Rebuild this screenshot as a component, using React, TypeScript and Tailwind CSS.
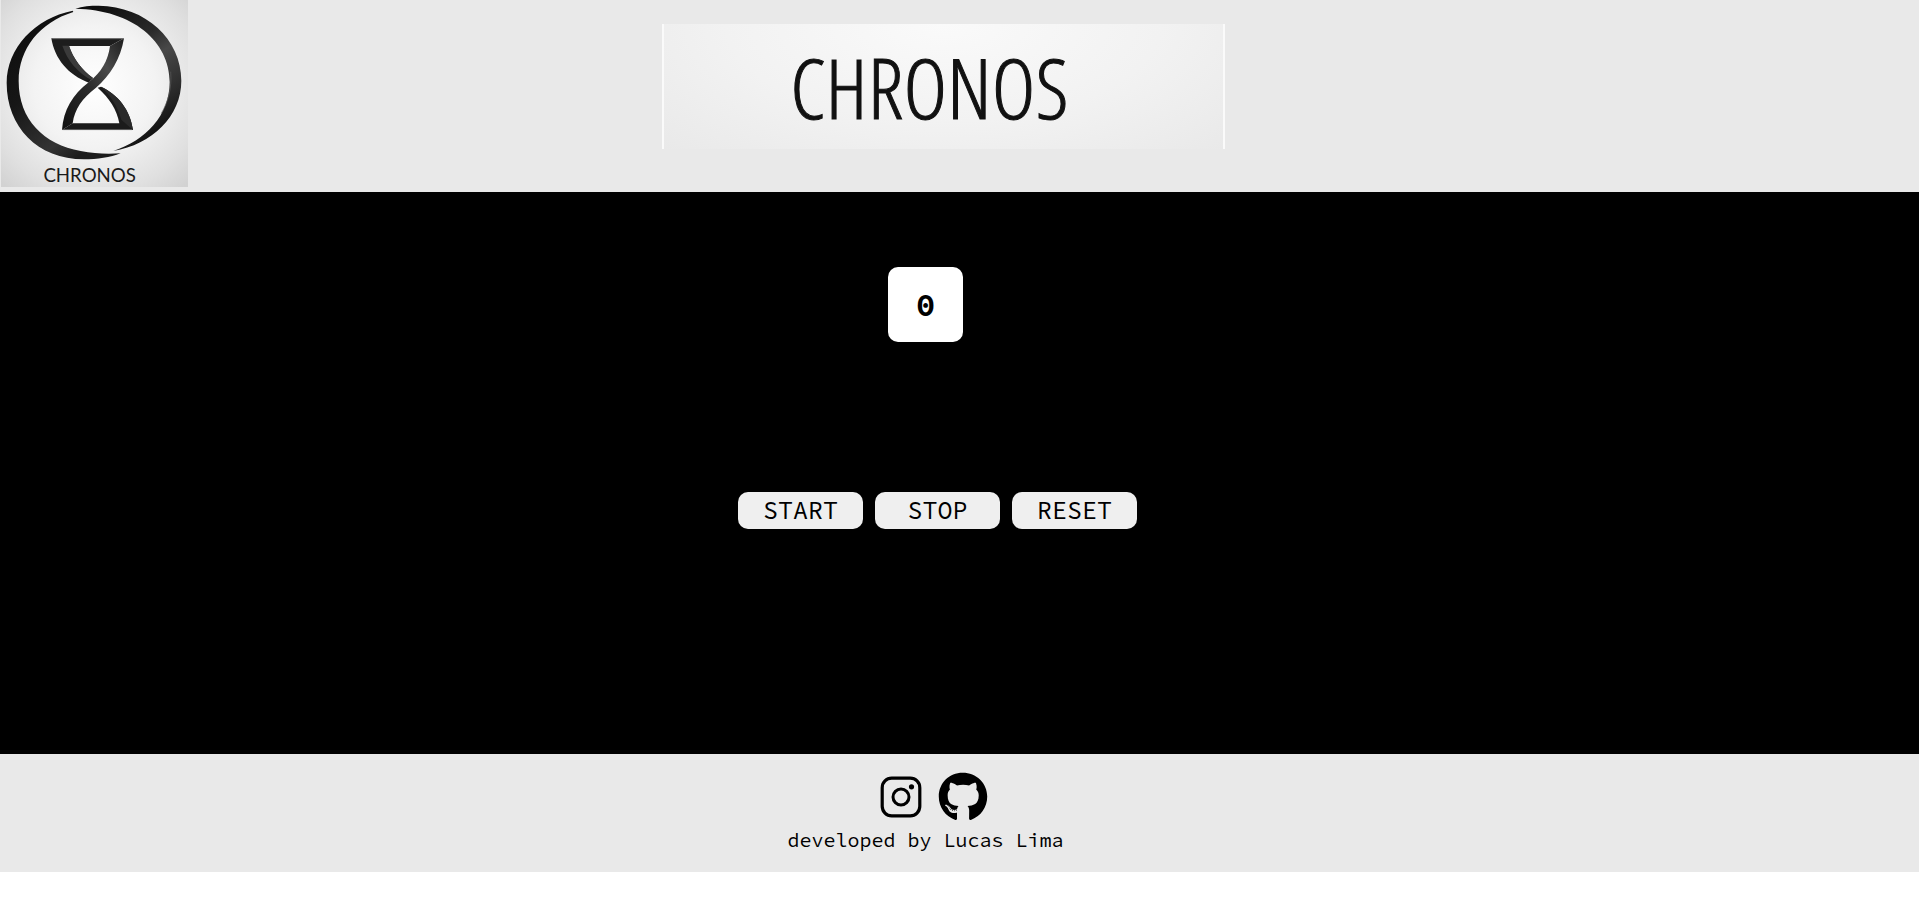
import { useEffect, useState } from "react";
import { FaGithub } from "react-icons/fa";

function Logo() {
  return (
    <svg viewBox="3 0 561 561" className="block size-[187px]" role="img" aria-label="Chronos logo">
      <defs>
        <radialGradient id="paper" cx="0.5" cy="0.46" r="0.72">
          <stop offset="0" stopColor="#ffffff" />
          <stop offset="0.45" stopColor="#f3f3f3" />
          <stop offset="0.8" stopColor="#e0e0e0" />
          <stop offset="1" stopColor="#d2d2d2" />
        </radialGradient>
        <linearGradient id="leftArc" x1="0" y1="0" x2="0.6" y2="1">
          <stop offset="0" stopColor="#0c0c0c" />
          <stop offset="0.5" stopColor="#161616" />
          <stop offset="0.85" stopColor="#333333" />
          <stop offset="1" stopColor="#1c1c1c" />
        </linearGradient>
        <linearGradient id="rightArc" x1="0.2" y1="0" x2="0.7" y2="1">
          <stop offset="0" stopColor="#0c0c0c" />
          <stop offset="0.35" stopColor="#2a2a2a" />
          <stop offset="0.5" stopColor="#484848" />
          <stop offset="0.75" stopColor="#2c2c2c" />
          <stop offset="1" stopColor="#080808" />
        </linearGradient>
        <linearGradient id="ribbon" x1="1" y1="0" x2="0" y2="1">
          <stop offset="0" stopColor="#1c1c1c" />
          <stop offset="0.3" stopColor="#4a4a4a" />
          <stop offset="0.55" stopColor="#2c2c2c" />
          <stop offset="1" stopColor="#101010" />
        </linearGradient>
      </defs>
      <rect x="3" width="561" height="561" fill="url(#paper)" />
      <path
        fill="url(#leftArc)"
        d="M218 32C105 55 20 143 20 249C20 380 112 478 252 478C292 478 331 472 362 460C318 462 283 461 242 453C132 433 56 360 56 243C56 147 119 67 220 36Z"
      />
      <path
        fill="url(#rightArc)"
        d="M226 26C248 18 270 17 296 17C438 19 544 118 544 242C544 349 456 433 340 453C437 421 509 346 509 246C509 124 398 29 226 26Z"
      />
      <path fill="none" stroke="#5a5a5a" strokeWidth="2" d="M512 215C516 262 505 305 484 340" />
      <path
        fill="#1d1d1d"
        d="M154 115H372L330 138H207C219 174 245 210 279 234L266 248C205 225 164 177 154 115Z"
      />
      <path fill="#3a3a3a" d="M187 137H207C219 174 245 210 279 234L274 240C231 216 202 181 187 137Z" />
      <path fill="#1b1b1b" d="M293 263L303 260C354 283 391 330 399 390H186L218 370H358C351 328 328 294 293 263Z" />
      <path fill="#2a2a2a" d="M303 260C354 283 391 330 399 390L364 359C352 317 332 287 303 260Z" />
      <path
        fill="url(#ribbon)"
        d="M372 115C362 177 330 228 288 263C247 295 224 326 218 370L186 390C190 330 218 284 266 247C304 217 324 183 330 138Z"
      />
      <path fill="none" stroke="#8a8a8a" strokeWidth="2" d="M157 116H369M188 389H396" />
      <text x="269" y="545" textAnchor="middle" fontSize="56" fill="#1a1a1a" className="font-[Lato]">
        CHRONOS
      </text>
    </svg>
  );
}

function InstagramIcon() {
  return (
    <svg viewBox="0 0 50 50" className="size-[50px]" fill="none" stroke="currentColor" aria-hidden="true">
      <rect x="6.2" y="6.2" width="37.6" height="37.6" rx="9.5" strokeWidth="3.2" />
      <circle cx="25" cy="25" r="8" strokeWidth="3" />
      <circle cx="35.5" cy="14.8" r="2.6" fill="currentColor" stroke="none" />
    </svg>
  );
}

const buttonClass =
  "h-[37px] w-[125px] cursor-pointer rounded-[10px] bg-[#efefef] pb-0.5 text-[25px] leading-8 text-black";

export default function App() {
  const [seconds, setSeconds] = useState(0);
  const [running, setRunning] = useState(false);

  useEffect(() => {
    if (!running) return;
    const id = window.setInterval(() => setSeconds((s) => s + 1), 1000);
    return () => window.clearInterval(id);
  }, [running]);

  const reset = () => {
    setRunning(false);
    setSeconds(0);
  };

  return (
    <div className="bg-white font-['Source_Code_Pro','Liberation_Mono',monospace] text-black">
      <header className="grid grid-cols-[188px_1fr_220px] bg-[#e9e9e9] pb-[5px]">
        <div className="pl-px">
          <Logo />
        </div>
        <h1 className="mt-6 flex h-[125px] w-full max-w-[563px] items-center justify-center justify-self-center border-x-2 border-[#fafafa] bg-[radial-gradient(ellipse_at_50%_0%,#fafafa_0%,#f2f2f2_55%,#e9e9e9_100%)] pr-7 font-['Open_Sans_Condensed_Light','Open_Sans_Condensed','Roboto_Condensed',sans-serif] text-[84px] leading-none font-light text-[#111111] [-webkit-text-stroke:1px_#111111]">
          CHRONOS
        </h1>
      </header>

      <main className="flex flex-col items-center bg-black pt-[75px] pr-[68px] pb-[225px]">
        <output className="flex size-[75px] items-center justify-center rounded-[10px] bg-white text-[32px] leading-10 font-bold">
          {seconds}
        </output>
        <div className="mt-[150px] ml-6 flex gap-3">
          <button type="button" className={buttonClass} onClick={() => setRunning(true)}>
            START
          </button>
          <button type="button" className={buttonClass} onClick={() => setRunning(false)}>
            STOP
          </button>
          <button type="button" className={buttonClass} onClick={reset}>
            RESET
          </button>
        </div>
      </main>

      <footer className="flex flex-col items-center bg-[#e9e9e9] pt-[18px] pr-[68px] pb-5">
        <div className="ml-3 flex items-center gap-3">
          <a href="https://www.instagram.com" aria-label="Instagram">
            <InstagramIcon />
          </a>
          <a href="https://github.com" aria-label="GitHub">
            <FaGithub className="size-[50px]" />
          </a>
        </div>
        <p className="mt-[5px] text-[20px] leading-[25px]">developed by Lucas Lima</p>
      </footer>
    </div>
  );
}
